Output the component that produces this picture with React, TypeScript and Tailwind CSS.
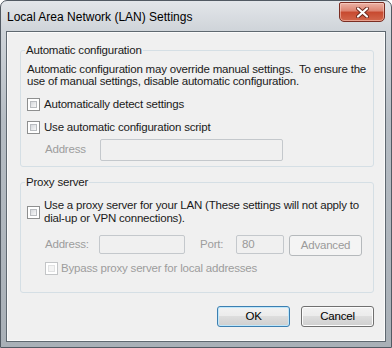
import React from "react";

const font = "font-['Liberation_Sans','Segoe_UI',Arial,sans-serif]";

function CheckBox({ disabled = false }: { disabled?: boolean }) {
  return (
    <span
      className={`flex h-[13px] w-[13px] shrink-0 border bg-white p-[2px] ${
        disabled ? "border-[#c3c5c7]" : "border-[#8e8f8f]"
      }`}
    >
      <span
        className={`block h-full w-full border ${
          disabled
            ? "border-[#e1e2e3] bg-[#f4f4f4]"
            : "border-[#b9bcc0] bg-[linear-gradient(135deg,#d5d8dc,#f8f8f8)]"
        }`}
      />
    </span>
  );
}

function TextBox({ className = "", children }: { className?: string; children?: React.ReactNode }) {
  return (
    <div
      className={`rounded-[2px] border border-[#c4c8cc] bg-[#f0f0f0] pl-[5px] text-[#9a9a9a] ${className}`}
    >
      {children}
    </div>
  );
}

function PushButton({ label, kind }: { label: string; kind: "default" | "normal" | "disabled" }) {
  const styles = {
    default:
      "border-[#3c7fb1] bg-[linear-gradient(#f2f2f2_0%,#ebebeb_50%,#dddddd_50%,#cfcfcf_100%)] shadow-[inset_0_0_0_1px_#bfe7fb] text-black",
    normal:
      "border-[#707070] bg-[linear-gradient(#f2f2f2_0%,#ebebeb_50%,#dddddd_50%,#cfcfcf_100%)] shadow-[inset_0_0_0_1px_#fcfcfc] text-black",
    disabled: "border-[#b5b9bc] bg-[#f4f4f4] text-[#9b9b9b]",
  }[kind];
  return (
    <div
      className={`flex h-[21px] w-[73px] items-center justify-center rounded-[3px] border leading-none ${styles}`}
    >
      {label}
    </div>
  );
}

export default function App() {
  return (
    <div className={`h-[348px] w-[392px] bg-white text-[12px] text-[#1a1a1a] ${font}`}>
      <div className="flex h-full flex-col rounded-t-[7px] border border-[#525a63] bg-[linear-gradient(180deg,#e3e6ea_0px,#cfd4d9_30px,#b5bcc3_120px,#a9b0b7_100%)] px-[5px] pb-[5px]">
        {/* Title bar */}
        <div className="flex h-[30px] items-start justify-between">
          <span className="pl-[1px] pt-[8px] text-[12px] leading-[16px] text-black">
            Local Area Network (LAN) Settings
          </span>
          <div className="mr-[1px] mt-[1px] flex h-[20px] w-[46px] items-center justify-center rounded-b-[5px] rounded-t-[2px] border border-[#7a2d22] bg-[linear-gradient(#ecb2a5_0%,#dc8370_45%,#c7492f_50%,#d2674c_100%)] shadow-[inset_0_0_0_1px_rgba(255,220,210,0.5)]">
            <svg width="13" height="11" viewBox="0 0 13 11">
              <path d="M2 1.5 L11 9.5 M11 1.5 L2 9.5" stroke="#6b2a1e" strokeWidth="4" strokeLinecap="round" />
              <path d="M2 1.5 L11 9.5 M11 1.5 L2 9.5" stroke="#ffffff" strokeWidth="2.2" strokeLinecap="round" />
            </svg>
          </div>
        </div>

        {/* Client area */}
        <div className="flex min-w-0 flex-1 flex-col border border-[#5f6870] bg-[#f0f0f0] pl-[13px] pr-[11px] pt-[11px] text-[11.5px] tracking-[-0.2px] shadow-[inset_0_0_0_1px_#fbfbfb]">
          {/* Automatic configuration */}
          <fieldset className="min-w-0 rounded-[3px] border border-[#d5dfe5] px-[6px] pb-[5px]">
            <legend className="-ml-[2px] px-[1px] leading-[14px]">Automatic configuration</legend>
            <p className="whitespace-nowrap pt-[6px] leading-[12px]">
              Automatic configuration may override manual settings.&nbsp; To ensure the
              <br />
              use of manual settings, disable automatic configuration.
            </p>
            <div className="mt-[11px] flex h-[13px] items-center gap-[4px]">
              <CheckBox />
              <span>Automatically detect settings</span>
            </div>
            <div className="mt-[10px] flex h-[13px] items-center gap-[4px]">
              <CheckBox />
              <span>Use automatic configuration script</span>
            </div>
            <div className="mt-[5px] flex items-center">
              <span className="ml-[18px] w-[55px] text-[#9d9d9d]">Address</span>
              <TextBox className="h-[22px] w-[183px]" />
            </div>
          </fieldset>

          {/* Proxy server */}
          <fieldset className="mt-[8px] min-w-0 rounded-[3px] border border-[#d5dfe5] px-[6px] pb-[17px]">
            <legend className="-ml-[2px] px-[1px] leading-[14px]">Proxy server</legend>
            <div className="mt-[10px] flex items-center gap-[4px]">
              <CheckBox />
              <span className="whitespace-nowrap leading-[13px]">
                Use a proxy server for your LAN (These settings will not apply to
                <br />
                dial-up or VPN connections).
              </span>
            </div>
            <div className="mt-[10px] flex items-start">
              <span className="ml-[18px] w-[54px] leading-[19px] text-[#9d9d9d]">Address:</span>
              <TextBox className="h-[19px] w-[86px]" />
              <span className="ml-[15px] w-[36px] leading-[19px] text-[#9d9d9d]">Port:</span>
              <TextBox className="h-[19px] w-[48px] leading-[17px]">80</TextBox>
              <div className="ml-[5px]">
                <PushButton label="Advanced" kind="disabled" />
              </div>
            </div>
            <div className="ml-[18px] mt-[6px] flex h-[13px] items-center gap-[3px]">
              <CheckBox disabled />
              <span className="text-[#9d9d9d]">Bypass proxy server for local addresses</span>
            </div>
          </fieldset>

          {/* Dialog buttons */}
          <div className="mt-[13px] flex justify-end gap-[11px]">
            <PushButton label="OK" kind="default" />
            <PushButton label="Cancel" kind="normal" />
          </div>
        </div>
      </div>
    </div>
  );
}
